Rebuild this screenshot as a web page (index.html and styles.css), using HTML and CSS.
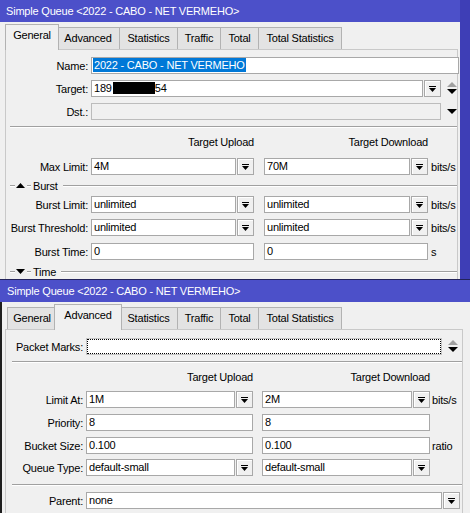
FILE: index.html
```html
<!DOCTYPE html>
<html>
<head>
<meta charset="utf-8">
<link rel="stylesheet" href="styles.css">
</head>
<body>
<div class="win win-top">
  <div class="title">Simple Queue &lt;2022 - CABO - NET VERMEHO&gt;</div>
  <div class="tabs">
    <div class="tab t1 active">General</div>
    <div class="tab t2">Advanced</div>
    <div class="tab t3">Statistics</div>
    <div class="tab t4">Traffic</div>
    <div class="tab t5">Total</div>
    <div class="tab t6">Total Statistics</div>
  </div>
  <div class="panel">
    <div class="row first">
      <div class="lbl">Name:</div>
      <div class="field f-name"><span class="sel">2022 - CABO - NET VERMEHO</span></div>
    </div>
    <div class="row">
      <div class="lbl">Target:</div>
      <div class="field f-target">189<span class="redact"></span>54</div>
      <div class="btn"><svg width="7" height="6" viewBox="0 0 7 6"><rect x="0" y="0" width="7" height="1" fill="#000"/><polygon points="0,2 7,2 3.5,6" fill="#000"/></svg></div>
      <div class="spin"><svg width="10" height="13" viewBox="0 0 10 13"><polygon points="0,5 10,5 5,0" fill="#a0a0a0"/><polygon points="0,7 10,7 5,12" fill="#000"/></svg></div>
    </div>
    <div class="row">
      <div class="lbl">Dst.:</div>
      <div class="field f-dst disabled"></div>
      <div class="spin"><svg width="10" height="6" viewBox="0 0 10 6"><polygon points="0,0 10,0 5,5" fill="#000"/></svg></div>
    </div>
    <div class="sep"></div>
    <div class="hdr">
      <div class="h-up">Target Upload</div>
      <div class="h-down">Target Download</div>
    </div>
    <div class="row r-max">
      <div class="lbl">Max Limit:</div>
      <div class="field up">4M</div>
      <div class="btn"><svg width="7" height="6" viewBox="0 0 7 6"><rect x="0" y="0" width="7" height="1" fill="#000"/><polygon points="0,2 7,2 3.5,6" fill="#000"/></svg></div>
      <div class="field down">70M</div>
      <div class="btn"><svg width="7" height="6" viewBox="0 0 7 6"><rect x="0" y="0" width="7" height="1" fill="#000"/><polygon points="0,2 7,2 3.5,6" fill="#000"/></svg></div>
      <div class="unit">bits/s</div>
    </div>
    <div class="sect s-burst">
      <div class="sl-a"></div>
      <svg class="tri" width="9" height="5" viewBox="0 0 9 5"><polygon points="0,5 9,5 4.5,0" fill="#000"/></svg>
      <div class="sl-b"></div>
      <div class="sname">Burst</div>
      <div class="sl-c"></div>
    </div>
    <div class="row r-bl">
      <div class="lbl">Burst Limit:</div>
      <div class="field up">unlimited</div>
      <div class="btn"><svg width="7" height="6" viewBox="0 0 7 6"><rect x="0" y="0" width="7" height="1" fill="#000"/><polygon points="0,2 7,2 3.5,6" fill="#000"/></svg></div>
      <div class="field down">unlimited</div>
      <div class="btn"><svg width="7" height="6" viewBox="0 0 7 6"><rect x="0" y="0" width="7" height="1" fill="#000"/><polygon points="0,2 7,2 3.5,6" fill="#000"/></svg></div>
      <div class="unit">bits/s</div>
    </div>
    <div class="row">
      <div class="lbl">Burst Threshold:</div>
      <div class="field up">unlimited</div>
      <div class="btn"><svg width="7" height="6" viewBox="0 0 7 6"><rect x="0" y="0" width="7" height="1" fill="#000"/><polygon points="0,2 7,2 3.5,6" fill="#000"/></svg></div>
      <div class="field down">unlimited</div>
      <div class="btn"><svg width="7" height="6" viewBox="0 0 7 6"><rect x="0" y="0" width="7" height="1" fill="#000"/><polygon points="0,2 7,2 3.5,6" fill="#000"/></svg></div>
      <div class="unit">bits/s</div>
    </div>
    <div class="row r-bt">
      <div class="lbl">Burst Time:</div>
      <div class="field up-full">0</div>
      <div class="field down-full">0</div>
      <div class="unit">s</div>
    </div>
    <div class="sect s-time">
      <div class="sl-a"></div>
      <svg class="tri" width="9" height="5" viewBox="0 0 9 5"><polygon points="0,0 9,0 4.5,5" fill="#000"/></svg>
      <div class="sl-b"></div>
      <div class="sname">Time</div>
      <div class="sl-c"></div>
    </div>
  </div>
</div>

<div class="win win-bottom">
  <div class="title">Simple Queue &lt;2022 - CABO - NET VERMEHO&gt;</div>
  <div class="wbody">
    <div class="tabs">
      <div class="tab t1">General</div>
      <div class="tab t2 active">Advanced</div>
      <div class="tab t3">Statistics</div>
      <div class="tab t4">Traffic</div>
      <div class="tab t5">Total</div>
      <div class="tab t6">Total Statistics</div>
    </div>
    <div class="panel">
      <div class="row first">
        <div class="lbl">Packet Marks:</div>
        <div class="pm"><div class="pm-in"></div></div>
        <div class="spin"><svg width="10" height="13" viewBox="0 0 10 13"><polygon points="0,5 10,5 5,0" fill="#a0a0a0"/><polygon points="0,7 10,7 5,12" fill="#000"/></svg></div>
      </div>
      <div class="sep"></div>
      <div class="hdr">
        <div class="h-up">Target Upload</div>
        <div class="h-down">Target Download</div>
      </div>
      <div class="row r-limit">
        <div class="lbl">Limit At:</div>
        <div class="field up">1M</div>
        <div class="btn"><svg width="7" height="6" viewBox="0 0 7 6"><rect x="0" y="0" width="7" height="1" fill="#000"/><polygon points="0,2 7,2 3.5,6" fill="#000"/></svg></div>
        <div class="field down">2M</div>
        <div class="btn"><svg width="7" height="6" viewBox="0 0 7 6"><rect x="0" y="0" width="7" height="1" fill="#000"/><polygon points="0,2 7,2 3.5,6" fill="#000"/></svg></div>
        <div class="unit">bits/s</div>
      </div>
      <div class="row">
        <div class="lbl">Priority:</div>
        <div class="field up-full">8</div>
        <div class="field down-full">8</div>
      </div>
      <div class="row">
        <div class="lbl">Bucket Size:</div>
        <div class="field up-full">0.100</div>
        <div class="field down-full">0.100</div>
        <div class="unit">ratio</div>
      </div>
      <div class="row r-queue">
        <div class="lbl">Queue Type:</div>
        <div class="field up">default-small</div>
        <div class="btn"><svg width="7" height="6" viewBox="0 0 7 6"><rect x="0" y="0" width="7" height="1" fill="#000"/><polygon points="0,2 7,2 3.5,6" fill="#000"/></svg></div>
        <div class="field down">default-small</div>
        <div class="btn"><svg width="7" height="6" viewBox="0 0 7 6"><rect x="0" y="0" width="7" height="1" fill="#000"/><polygon points="0,2 7,2 3.5,6" fill="#000"/></svg></div>
      </div>
      <div class="sep sep2"></div>
      <div class="row r-parent">
        <div class="lbl">Parent:</div>
        <div class="field f-parent">none</div>
        <div class="btn"><svg width="7" height="6" viewBox="0 0 7 6"><rect x="0" y="0" width="7" height="1" fill="#000"/><polygon points="0,2 7,2 3.5,6" fill="#000"/></svg></div>
      </div>
    </div>
  </div>
</div>
</body>
</html>
```

FILE: styles.css
```css
* { box-sizing: border-box; }

html, body {
  margin: 0;
  padding: 0;
}

body {
  width: 470px;
  height: 513px;
  overflow: hidden;
  background: #3e3eb6;
  font-family: "Liberation Sans", Arial, sans-serif;
  font-size: 11px;
  letter-spacing: -0.2px;
  color: #000;
}

.win {
  background: #f0f0f0;
  overflow: hidden;
}

.win-top {
  width: 460px;
  height: 279px;
}

.win-bottom {
  width: 470px;
  height: 234px;
  border-top: 1px solid #23235a;
}

.title {
  height: 22px;
  line-height: 23px;
  background: #4c50c9;
  color: #fff;
  padding-left: 6px;
  white-space: nowrap;
}

.win-bottom .title {
  padding-left: 7px;
}

.wbody {
  border-left: 2px solid #1e1e1e;
  height: 211px;
}

.tabs {
  height: 27px;
  display: flex;
  align-items: flex-end;
  padding-left: 7px;
  position: relative;
  z-index: 2;
}

.wbody .tabs {
  padding-left: 5px;
}

.tab {
  box-sizing: content-box;
  flex: none;
  height: 21px;
  line-height: 21px;
  border: 1px solid #b2b2b2;
  border-bottom: none;
  background: #e3e3e3;
  text-align: center;
  margin-right: -1px;
  white-space: nowrap;
}

.tab.active {
  height: 25px;
  line-height: 21px;
  background: #f0f0f0;
  padding: 0 2px;
  margin-left: -2px;
  margin-right: -3px;
  margin-bottom: -1px;
  position: relative;
  z-index: 3;
}

.t1 { width: 48px; }
.t2 { width: 62px; }
.t3 { width: 57px; }
.t4 { width: 42px; }
.t5 { width: 37px; }
.t6 { width: 82px; }

.panel {
  margin: 0 2px 0 5px;
  border: 1px solid #c9c9c9;
  background: #f0f0f0;
  height: 260px;
  position: relative;
  z-index: 1;
}

.wbody .panel {
  margin: 0 7px 0 3px;
}

.row {
  display: flex;
  align-items: center;
  height: 17px;
  margin-top: 6px;
}

.row.first {
  margin-top: 7px;
}

.wbody .row.first {
  margin-top: 8px;
}

.lbl {
  flex: none;
  width: 82px;
  margin-right: 3px;
  text-align: right;
  white-space: nowrap;
}

.wbody .lbl {
  width: 77px;
}

.field {
  flex: none;
  height: 17px;
  border: 1px solid #a8a8a8;
  background: #fff;
  padding-left: 2px;
  line-height: 15px;
  white-space: nowrap;
  overflow: hidden;
}

.field.disabled {
  background: #f0f0f0;
  border-color: #bcbcbc;
}

.f-name { width: 368px; padding-left: 1px; }
.f-target { width: 332px; }
.f-dst { width: 350px; }

.sel {
  background: #0078d7;
  color: #fff;
  display: inline-block;
  line-height: 14px;
  padding: 0 1px 0 1px;
}

.redact {
  display: inline-block;
  width: 42px;
  height: 12px;
  background: #000;
  vertical-align: -2px;
  margin-left: 1px;
}

.btn {
  flex: none;
  width: 17px;
  height: 17px;
  margin-left: 1px;
  border: 1px solid #a8a8a8;
  background: #f0f0f0;
  box-shadow: inset 1px 1px 0 #fff;
  display: flex;
  align-items: center;
  justify-content: center;
}

.btn svg {
  display: block;
}

.spin {
  flex: none;
  margin-left: 6px;
  width: 10px;
  display: flex;
  align-items: center;
  justify-content: center;
}

.spin svg { display: block; }

.up { width: 145px; }
.down { width: 146px; margin-left: 10px; }
.up-full { width: 163px; }
.down-full { width: 164px; margin-left: 10px; }

.unit {
  margin-left: 3px;
  white-space: nowrap;
}

.sep {
  margin: 6px 0 0 4px;
  border-top: 1px solid #a0a0a0;
  border-bottom: 1px solid #fff;
  height: 2px;
}

.hdr {
  display: flex;
  height: 14px;
  line-height: 14px;
  margin-top: 7px;
  padding-left: 85px;
  white-space: nowrap;
}

.h-up { width: 163px; text-align: right; }
.h-down { width: 164px; margin-left: 10px; text-align: right; }

.r-max { margin-top: 9px; }

.sect {
  display: flex;
  align-items: center;
  height: 13px;
  margin-top: 4px;
  margin-left: 4px;
}

.sect .tri { display: block; flex: none; margin-left: 1px; }

.sl-a, .sl-b, .sl-c {
  border-top: 1px solid #a0a0a0;
  border-bottom: 1px solid #fff;
  height: 2px;
}

.sl-a { width: 5px; flex: none; }
.sl-b { width: 4px; margin-left: 2px; flex: none; }
.sname { margin-left: 2px; flex: none; }
.sl-c { flex: 1; margin-left: 5px; }

.r-bl { margin-top: 4px; }
.r-bt { margin-top: 7px; }

.s-time { margin-top: 5px; }

/* bottom window specifics */
.pm {
  flex: none;
  width: 356px;
  height: 17px;
  border: 1px solid #c4c4c4;
  background: #fff;
}

.pm-in {
  height: 100%;
  border: 1px dotted #000;
}

.wbody .spin { margin-left: 6px; }

.wbody .sep { margin: 6px 0 0 6px; }

.wbody .hdr { padding-left: 80px; margin-top: 7px; }
.wbody .h-up { width: 167px; }
.wbody .h-down { width: 168px; margin-left: 9px; }

.r-limit { margin-top: 7px; }
.r-queue { margin-top: 5px; }

.wbody .up { width: 149px; }
.wbody .down { width: 150px; margin-left: 9px; }
.wbody .up-full { width: 167px; }
.wbody .down-full { width: 168px; margin-left: 9px; }
.wbody .unit { margin-left: 2px; }

.sep.sep2 { margin-top: 8px; }

.f-parent { width: 356px; }
```
